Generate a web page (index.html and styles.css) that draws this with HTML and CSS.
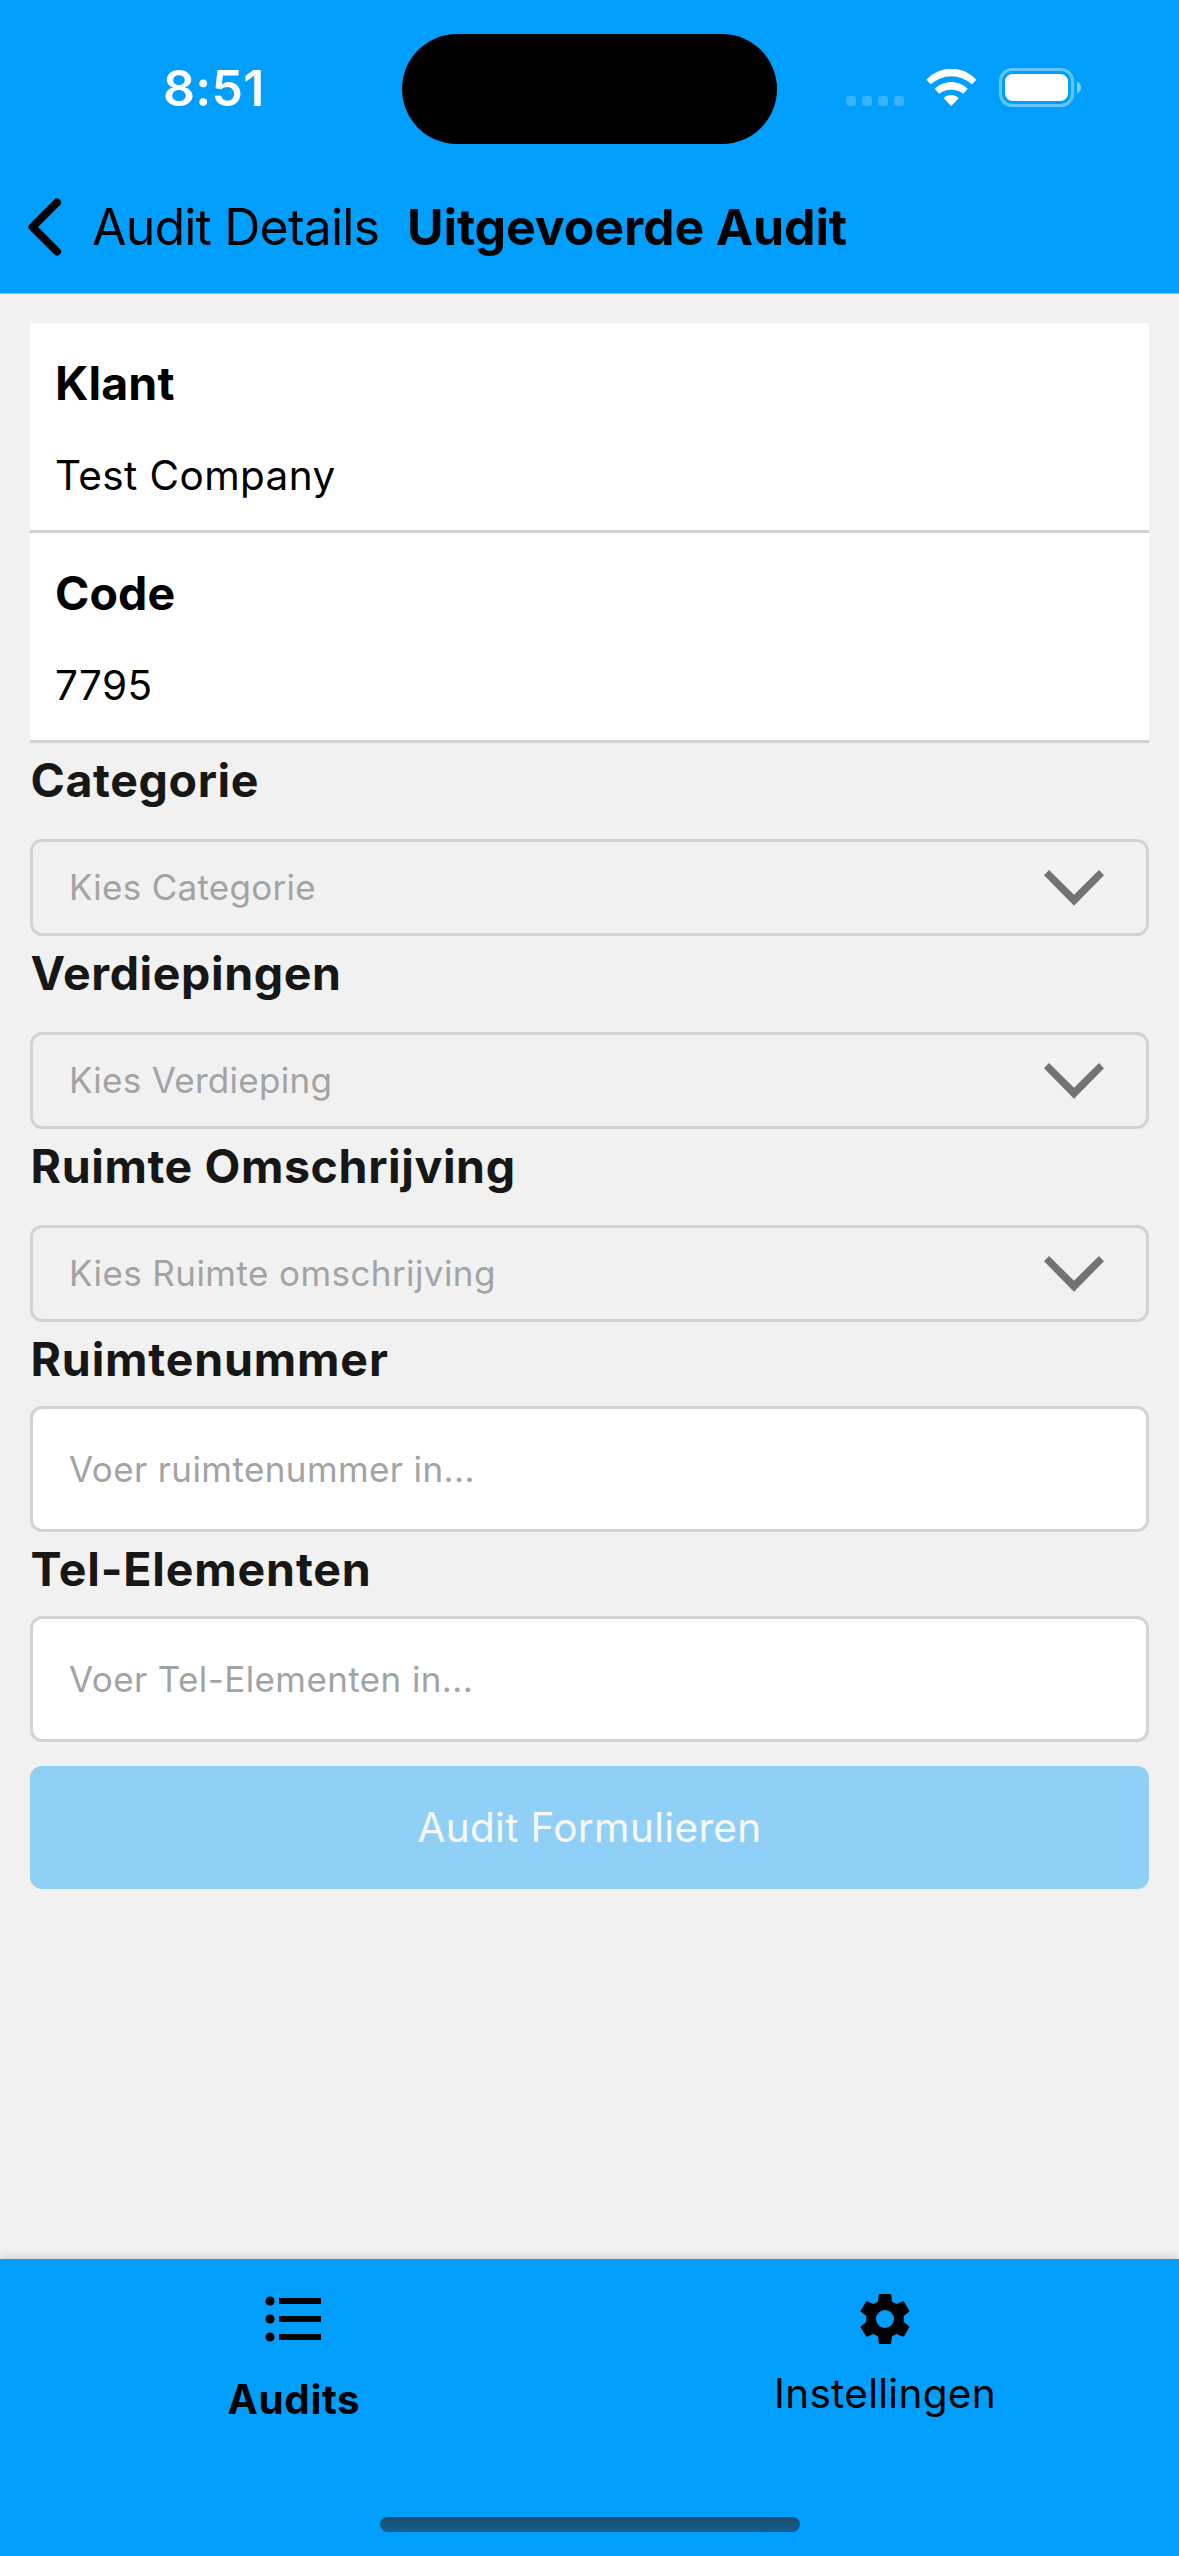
FILE: index.html
```html
<!DOCTYPE html>
<html lang="nl">
<head>
<meta charset="utf-8">
<title>Uitgevoerde Audit</title>
<link rel="stylesheet" href="styles.css">
</head>
<body>
<div class="screen">
  <header class="header">
    <div class="status">
      <div class="status-time">8:51</div>
      <div class="island"></div>
      <div class="status-icons">
        <svg class="signal" viewBox="0 0 58 10" fill="#fff" fill-opacity=".22"><rect width="10" height="10" rx="3"/><rect x="16" width="10" height="10" rx="3"/><rect x="32" width="10" height="10" rx="3"/><rect x="48" width="10" height="10" rx="3"/></svg>
        <svg class="wifi" viewBox="289 57 153 111" fill="#fff"><path d="M290 89A102 102 0 0 1 440 89L427 103A92 92 0 0 0 303 103ZM315 116A71 71 0 0 1 414 116L401 131A63 63 0 0 0 328 131ZM342 145A31 31 0 0 1 387 145L364.500 168Z"/></svg>
        <svg class="battery" viewBox="0 0 83 39"><rect x="1.500" y="1.500" width="72" height="36" rx="11.500" fill="none" stroke="#fff" stroke-opacity=".4" stroke-width="3"/><rect x="6" y="6" width="63" height="27" rx="7.500" fill="#fff"/><path d="M78 13.500C83.300 15.500 83.300 23.500 78 25.500Z" fill="#fff" fill-opacity=".5"/></svg>
      </div>
    </div>
    <nav class="navbar">
      <svg class="back-icon" viewBox="0 0 34 58" fill="none" stroke="#000" stroke-width="8" stroke-linecap="round" stroke-linejoin="round"><path d="M29 4.500L4.500 29 29 53.500"/></svg>
      <span class="back-label">Audit Details</span>
      <h1 class="title">Uitgevoerde Audit</h1>
    </nav>
  </header>

  <main class="content">
    <section class="card">
      <div class="card-row"><h2 class="card-title">Klant</h2><p class="card-value">Test Company</p></div>
      <div class="card-row"><h2 class="card-title">Code</h2><p class="card-value">7795</p></div>
    </section>

    <div class="field">
      <div class="label label-short">Categorie</div>
      <div class="select"><span>Kies Categorie</span><svg class="chevron" viewBox="0 0 60 36"><path d="M0 5.300 5 0 30 24.700 55 0 60 5.300 30 35.700Z"/></svg></div>
    </div>
    <div class="field">
      <div class="label label-short">Verdiepingen</div>
      <div class="select"><span>Kies Verdieping</span><svg class="chevron" viewBox="0 0 60 36"><path d="M0 5.300 5 0 30 24.700 55 0 60 5.300 30 35.700Z"/></svg></div>
    </div>
    <div class="field">
      <div class="label label-short">Ruimte Omschrijving</div>
      <div class="select select-wide"><span>Kies Ruimte omschrijving</span><svg class="chevron" viewBox="0 0 60 36"><path d="M0 5.300 5 0 30 24.700 55 0 60 5.300 30 35.700Z"/></svg></div>
    </div>
    <div class="field field-input">
      <div class="label">Ruimtenummer</div>
      <div class="input">Voer ruimtenummer in...</div>
    </div>
    <div class="field field-input">
      <div class="label">Tel-Elementen</div>
      <div class="input">Voer Tel-Elementen in...</div>
    </div>
    <div class="submit">Audit Formulieren</div>
  </main>

  <footer class="tabbar">
    <div class="tabs">
      <div class="tab tab-active">
        <svg class="tab-icon" viewBox="0 0 72 72"><circle cx="12" cy="18" r="4.600"/><circle cx="12" cy="36" r="4.600"/><circle cx="12" cy="54" r="4.600"/><path d="M21 15h42v6H21zM21 33h42v6H21zM21 51h42v6H21z"/></svg>
        <span class="tab-label">Audits</span>
      </div>
      <div class="tab">
        <svg class="tab-icon" viewBox="-108 -108 216 216"><path fill-rule="evenodd" d="M-16-75H16Q18-75 18.500-73L21-52 35-45 54-53Q56-54 57-52L73-25Q74-23 72-21.500L56-9Q57.500 0 56 9L72 21.500Q74 23 73 25L57 52Q56 54 54 53L35 45 21 52 18.500 73Q18 75 16 75H-16Q-18 75-18.500 73L-21 52-35 45-54 53Q-56 54-57 52L-73 25Q-74 23-72 21.500L-56 9Q-57.500 0-56-9L-72-21.500Q-74-23-73-25L-57-52Q-56-54-54-53L-35-45-21-52-18.500-73Q-18-75-16-75ZM0-27A27 27 0 1 0 0 27 27 27 0 1 0 0-27Z"/></svg>
        <span class="tab-label">Instellingen</span>
      </div>
    </div>
    <div class="home-indicator"></div>
  </footer>
</div>
</body>
</html>
```
FILE: styles.css
```css
* { box-sizing: border-box; margin: 0; padding: 0; }

body {
  background: #f1f1f1;
  color: #000;
  font-family: Inter, "Liberation Sans", sans-serif;
}

svg { display: block; flex: none; }

.screen {
  width: 1179px;
  height: 2556px;
  display: flex;
  flex-direction: column;
}

/* Header */
.header {
  height: 294px;
  background: #009ffe;
  border-bottom: 1px solid #a6b4bd;
}

.status {
  height: 177px;
  display: grid;
  grid-template-columns: 402px 375px 402px;
  align-items: start;
}

.status-time {
  padding: 58px 0 0 163px;
  color: #fff;
  font-size: 50px;
  font-weight: 600;
  line-height: 60px;
  letter-spacing: 0.3px;
}

.island {
  height: 110px;
  margin-top: 34px;
  border-radius: 55px;
  background: #000;
}

.status-icons {
  display: flex;
  align-items: flex-end;
  padding: 68px 0 0 69px;
}

.signal { width: 58px; height: 10px; margin-bottom: 1px; }
.wifi { width: 51px; height: 37px; margin: 0 0 1px 22px; }
.battery { width: 83px; height: 39px; margin-left: 22px; }

.navbar {
  height: 100px;
  display: flex;
  align-items: center;
  padding-left: 28px;
  font-size: 50px;
  line-height: 60px;
  white-space: nowrap;
}

.back-icon { width: 34px; height: 58px; }
.back-label { width: 315px; margin-left: 30px; letter-spacing: -0.82px; }
.title { font-size: 50px; font-weight: 700; letter-spacing: -0.12px; }

/* Form */
.content { flex: 1; padding: 29px 30px 0; }

.card-row {
  height: 210px;
  padding: 30px 25px 0;
  background: #fff;
  border-bottom: 3px solid #d1d1d6;
}

.card-title { font-size: 46.5px; line-height: 60px; letter-spacing: 0.1px; }
.card-value { margin-top: 33px; font-size: 40.5px; line-height: 60px; letter-spacing: 0.38px; }

.field { padding-top: 7px; }

.label {
  margin-bottom: 29px;
  padding-left: 0.5px;
  color: #171717;
  font-size: 46.5px;
  font-weight: 700;
  line-height: 60px;
  letter-spacing: 0.83px;
}

.label-short { letter-spacing: 0.6px; }
.field-input .label { margin-bottom: 17px; }

.select,
.input {
  display: flex;
  align-items: center;
  border: 3px solid #d3d3d3;
  border-radius: 12px;
  color: #a3a3a3;
  font-size: 35px;
  letter-spacing: 0.4px;
}

.select {
  height: 97px;
  justify-content: space-between;
  padding: 0 42px 0 36px;
  letter-spacing: 0.28px;
}

.select span { margin-bottom: 2px; }
.select-wide { letter-spacing: 0.42px; }
.chevron { width: 60px; height: 36px; fill: #737373; }

.input { height: 126px; padding-left: 36px; background: #fff; }

.submit {
  height: 123px;
  margin-top: 24px;
  border-radius: 12px;
  background: #91d0f6;
  color: #f8f8f8;
  font-size: 40.5px;
  line-height: 124px;
  letter-spacing: 0.34px;
  text-align: center;
}

/* Bottom tabs */
.tabbar {
  height: 297px;
  display: flex;
  flex-direction: column;
  align-items: center;
  justify-content: space-between;
  padding-bottom: 24px;
  background: #009ffe;
  box-shadow: 0 0 10px rgba(0, 0, 0, 0.2);
}

.tabs { display: flex; width: 100%; padding-top: 24px; }

.tab {
  width: 591px;
  padding-left: 3px;
  display: flex;
  flex-direction: column;
  align-items: center;
}

.tab-active { width: 588px; padding-left: 0; }
.tab-icon { width: 72px; height: 72px; }
.tab-label { margin-top: 9px; font-size: 40.5px; line-height: 60px; letter-spacing: 0.3px; }
.tab-active .tab-label { margin-top: 15px; font-weight: 700; letter-spacing: 0.6px; }

.home-indicator {
  width: 420px;
  height: 15px;
  border-radius: 8px;
  background: linear-gradient(#184c6c, #125f90);
}
```
